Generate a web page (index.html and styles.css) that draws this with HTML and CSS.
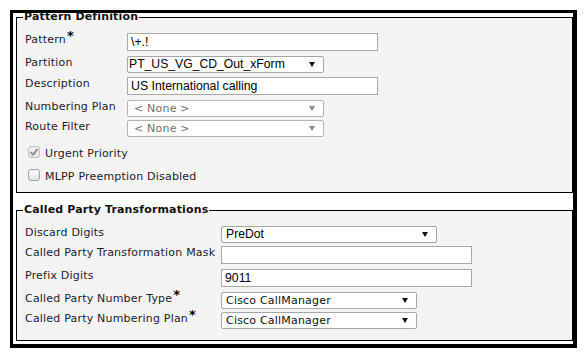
FILE: index.html
```html
<!DOCTYPE html>
<html>
<head>
<meta charset="utf-8">
<link rel="stylesheet" href="styles.css">
</head>
<body>
<div class="frame">
  <fieldset class="group g1">
    <legend>Pattern Definition</legend>
    <div class="form form-1">
      <div class="lbl">Pattern<span class="req">*</span></div>
      <div class="field w251">\+.!</div>

      <div class="lbl">Partition</div>
      <div class="sel w197 sel-part"><span class="sv arial">PT_US_VG_CD_Out_xForm</span><svg class="arr" width="6" height="5" viewBox="0 0 6 5"><path d="M0 0H6L3 5Z"/></svg></div>

      <div class="lbl">Description</div>
      <div class="field w251">US International calling</div>

      <div class="lbl">Numbering Plan</div>
      <div class="sel w197 dis"><span class="sv">&lt; None &gt;</span><svg class="arr" width="6" height="5" viewBox="0 0 6 5"><path d="M0 0H6L3 5Z"/></svg></div>

      <div class="lbl">Route Filter</div>
      <div class="sel w197 dis"><span class="sv">&lt; None &gt;</span><svg class="arr" width="6" height="5" viewBox="0 0 6 5"><path d="M0 0H6L3 5Z"/></svg></div>
    </div>
    <div class="checks">
      <div class="chk">
        <span class="cb cb-on"><svg width="10" height="10" viewBox="0 0 10 10"><path d="M1.6 5.2L4 7.6L8.6 2.2" fill="none" stroke="#8c8c8c" stroke-width="1.8"/></svg></span>
        <span class="txt">Urgent Priority</span>
      </div>
      <div class="chk">
        <span class="cb"></span>
        <span class="txt">MLPP Preemption Disabled</span>
      </div>
    </div>
  </fieldset>

  <fieldset class="group g2">
    <legend>Called Party Transformations</legend>
    <div class="form form-2">
      <div class="lbl">Discard Digits</div>
      <div class="sel w216"><span class="sv arial">PreDot</span><svg class="arr" width="6" height="5" viewBox="0 0 6 5"><path d="M0 0H6L3 5Z"/></svg></div>

      <div class="lbl">Called Party Transformation Mask</div>
      <div class="field w251"></div>

      <div class="lbl">Prefix Digits</div>
      <div class="field w251">9011</div>

      <div class="lbl">Called Party Number Type<span class="req">*</span></div>
      <div class="sel w196"><span class="sv">Cisco CallManager</span><svg class="arr" width="6" height="5" viewBox="0 0 6 5"><path d="M0 0H6L3 5Z"/></svg></div>

      <div class="lbl">Called Party Numbering Plan<span class="req">*</span></div>
      <div class="sel w196"><span class="sv">Cisco CallManager</span><svg class="arr" width="6" height="5" viewBox="0 0 6 5"><path d="M0 0H6L3 5Z"/></svg></div>
    </div>
  </fieldset>
</div>
</body>
</html>
```

FILE: styles.css
```css
body {
  margin: 0;
  background: #fff;
  font-family: "DejaVu Sans", Verdana, sans-serif;
  font-size: 11px;
  letter-spacing: 0.2px;
  color: #231a2c;
}

.frame {
  box-sizing: border-box;
  width: 567px;
  height: 338px;
  margin: 10px 0 0 10px;
  border-style: solid;
  border-color: #000;
  border-width: 3px 4px 4px 3px;
  padding: 0 0 2px 3px;
  background: #fff;
}

.group {
  margin: 0;
  min-width: 0;
  border: 1px solid #000;
  background: #f4f4f4;
  padding: 12px 0 0 6px;
}

.group legend {
  padding: 0 1px;
  font-weight: bold;
  font-size: 11px;
  letter-spacing: 0.15px;
  line-height: 8px;
  color: #111;
}

.g2 {
  margin-top: 13px;
  padding-bottom: 11px;
}

.form {
  display: grid;
  row-gap: 3px;
  padding-left: 2px;
  align-items: start;
  justify-items: start;
}

.form-1 { grid-template-columns: 102px auto; }
.form-2 { grid-template-columns: 196px auto; }

.lbl {
  line-height: 13px;
  white-space: nowrap;
}

.req {
  font-weight: bold;
  font-size: 13px;
  color: #000;
  vertical-align: 3px;
  margin-left: 1px;
  line-height: 0;
}

.field {
  box-sizing: border-box;
  height: 18px;
  margin-bottom: 2px;
  padding: 0 3px;
  border: 1px solid #a9a9a9;
  background: #fff;
  font-family: "Liberation Sans", Arial, sans-serif;
  font-size: 12.3px;
  letter-spacing: 0;
  line-height: 16px;
  color: #000;
  white-space: nowrap;
  overflow: hidden;
}

.sel {
  box-sizing: border-box;
  height: 17px;
  display: flex;
  align-items: center;
  justify-content: space-between;
  padding: 0 8px 0 4px;
  border: 1px solid #a6a6a6;
  border-radius: 2px;
  background: #fff;
  color: #111;
  white-space: nowrap;
}

.sel .sv { line-height: 15px; }
.sel .arial {
  font-family: "Liberation Sans", Arial, sans-serif;
  font-size: 12.2px;
  letter-spacing: 0;
  color: #000;
}
.sel-part { padding-left: 1px; margin-bottom: 1px; }

.arr { fill: #111; margin-bottom: 1px; }

.dis { border-color: #b4b4b4; }
.dis .sv { color: #707070; padding-left: 2px; }
.dis .arr { fill: #8a8a8a; }

.w251 { width: 251px; }
.w197 { width: 197px; }
.w196 { width: 196px; }
.w216 { width: 216px; }

.checks {
  margin-top: 9px;
  padding-left: 2px;
}

.chk {
  display: flex;
  align-items: flex-start;
  height: 23px;
}

.cb {
  box-sizing: border-box;
  width: 12px;
  height: 12px;
  margin: 0 5px 0 3px;
  border: 1px solid #a3a3a3;
  border-radius: 3px;
  background: linear-gradient(#fcfcfc, #e4e4e4);
  display: flex;
  align-items: center;
  justify-content: center;
}

.cb-on {
  border-color: #c2c2c2;
  background: linear-gradient(#f2f2f2, #e2e2e2);
}

.chk .txt {
  padding-top: 1px;
  line-height: 13px;
}
```
